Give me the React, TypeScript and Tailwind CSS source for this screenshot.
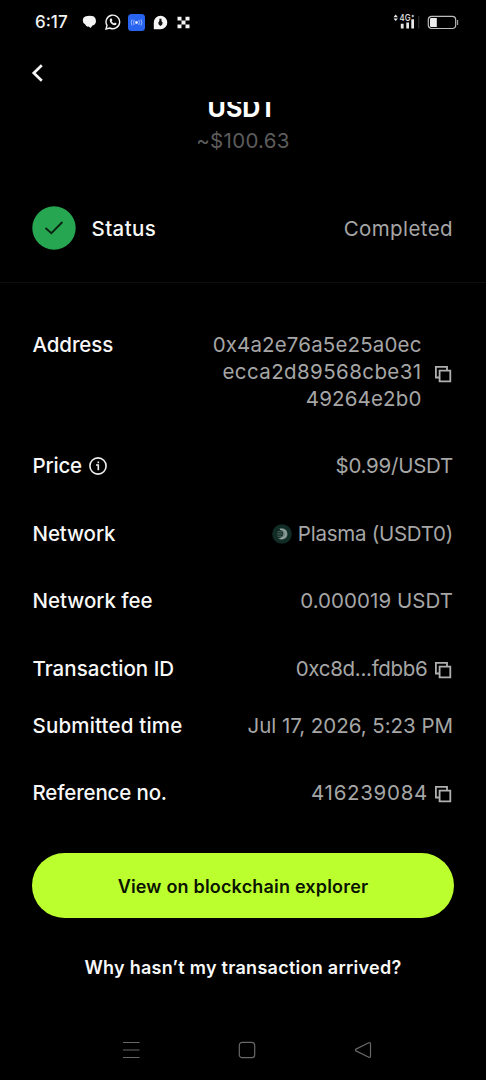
import type { ReactNode } from "react";

function CopyIcon({ className = "" }: { className?: string }) {
  return (
    <svg className={`size-[18px] shrink-0 ${className}`} viewBox="0 0 18 18" fill="none" stroke="#b0b0b0" strokeWidth="1.8">
      <path d="M5 12.5H1.9V1.9H13V5" />
      <path d="M5.6 5.6H16.3V16.3H5.6Z" />
    </svg>
  );
}

function PlasmaIcon() {
  return (
    <svg className="size-5 shrink-0" viewBox="0 0 20 20" fill="none">
      <circle cx="10" cy="10" r="9.8" fill="#112b25" />
      <path d="M7 4.8Q13 3 15.2 8Q16.5 13.5 11.5 15.3Q8.5 16 6 14.6Q11.5 13 11.2 9.5Q11 6.5 7 4.8Z" fill="#71857f" />
      <path d="M8 5.4Q14.2 5.6 14 10Q13.6 13.8 8.5 14.6" stroke="#98a8a2" strokeWidth="1.1" />
      <path d="M5.5 7.8H10M5 10H10.5M5.5 12.2H9.5" stroke="#4f665e" strokeWidth="1" />
    </svg>
  );
}

function StatusBar() {
  return (
    <div className="flex h-11 shrink-0 items-center pl-[35px] pr-[27px]">
      <span className="w-[47px] text-[17px] font-medium leading-none text-[#f2f2f2]">6:17</span>
      <svg className="h-4 w-[15px]" viewBox="0 0 15 16" fill="#f4f4f4">
        <path d="M3.8 2.2Q7.5 1.4 11.5 2.2Q14 3.6 14 7Q13.8 10.6 10.5 11.6L8.5 14L6.8 12.6Q4 13.2 3.3 10.6Q.8 9.5 .8 6.5Q.8 3.2 3.8 2.2Z" />
      </svg>
      <svg className="ml-[8px] size-4" viewBox="0 0 16 16" fill="none" stroke="#f2f2f2">
        <path d="M1 15L2 11.4A6.8 6.8 0 1 1 4.8 14Z" strokeWidth="1.4" />
        <path d="M5.5 4.5L6.7 4.4L7.4 6.2L6.6 7.2Q7.4 8.8 9 9.5L9.9 8.6L11.6 9.5Q11.5 11.2 9.8 11.3Q5.2 10.4 4.7 6.2Q4.7 5 5.5 4.5Z" fill="#f2f2f2" stroke="none" />
      </svg>
      <svg className="ml-[7px] size-[17px]" viewBox="0 0 17 17" fill="none">
        <rect width="17" height="17" rx="3.5" fill="#2864f0" />
        <circle cx="8.5" cy="8.5" r="1.3" fill="#fff" />
        <path d="M6.2 6Q5 8.5 6.2 11M10.8 6Q12 8.5 10.8 11M4 5.5Q2.4 8.5 4 11.5M13 5.5Q14.6 8.5 13 11.5" stroke="#9db8ff" strokeWidth="1" />
      </svg>
      <svg className="ml-2 size-[15px]" viewBox="0 0 15 15">
        <path d="M7.5 .7A6.8 6.8 0 0 1 7.5 14.3H.8V7.5A6.8 6.8 0 0 1 7.5 .7Z" fill="#f6f6f6" />
        <path d="M6.4 3.8H8.5V6L9.7 7.8Q9.6 10 7.5 11Q5.4 10 5.2 7.8L6.4 6Z" fill="#111" />
      </svg>
      <svg className="ml-[9px] size-[13px]" viewBox="0 0 13 13" fill="#f4f4f4">
        <path d="M.5 .8H4.5V4.6H.5ZM8.5 .8H12.5V4.6H8.5ZM4.5 4.6H8.5V8.4H4.5ZM.5 8.4H4.5V12.2H.5ZM8.5 8.4H12.5V12.2H8.5Z" />
      </svg>
      <svg className="ml-auto h-[18px] w-[28px]" viewBox="0 0 28 18" fill="#e8e8e8">
        <path d="M.5 4.2L2.7 1.6L4.9 4.2ZM.5 5.4L2.7 8L4.9 5.4Z" />
        <text x="6.5" y="8" fontFamily="Inter, sans-serif" fontSize="9" fontWeight="500" textLength="11" lengthAdjust="spacingAndGlyphs">4G</text>
        <path d="M18.6 2.6H21V3.4H18.6ZM19.4 1.8H20.2V4.2H19.4Z" />
        <path d="M7.8 10.8H10.6V15.5H7.8ZM13.3 9.6H16V15.5H13.3ZM18.3 6.2H21V15.5H18.3Z" />
        <path d="M25 3H26.3V15.5H25Z" fill="#252525" />
      </svg>
      <svg className="ml-[6px] h-[15px] w-[32px]" viewBox="0 0 32 15" fill="none">
        <rect x="1.3" y="1.3" width="27.4" height="12.2" rx="3.5" stroke="#bdbdbd" strokeWidth="1.2" />
        <path d="M4.3 3H9.8V11.9H4.3Q3 11.9 3 10.7V4.2Q3 3 4.3 3Z" fill="#ededed" />
        <path d="M30.6 5V10" stroke="#999" strokeWidth="1.2" />
      </svg>
    </div>
  );
}

function Row({ label, tracking, height, icon, children }: { label: string; tracking: string; height: string; icon?: ReactNode; children: ReactNode }) {
  return (
    <div className={`flex items-center justify-between ${height}`}>
      <div className="flex items-center gap-[7px]">
        <span className={`font-medium text-[#f8f8f8] ${tracking}`}>{label}</span>
        {icon}
      </div>
      <div className="flex items-center text-[#a6a6a6]">{children}</div>
    </div>
  );
}

export default function App() {
  return (
    <div className="flex h-[1080px] w-[486px] flex-col overflow-hidden whitespace-nowrap bg-black font-['Inter',sans-serif] text-[20.5px] leading-[27px] text-white">
      <StatusBar />
      <header className="flex h-[58px] shrink-0 items-center pl-[31px]">
        <svg className="h-[18px] w-3" viewBox="0 0 12 18" fill="none" stroke="#f5f5f5" strokeWidth="2.7">
          <path d="M10.8 1.2L2.8 9L10.8 16.8" />
        </svg>
      </header>
      <main className="flex min-h-0 flex-1 flex-col overflow-hidden">
        <div className="flex h-[94px] shrink-0 flex-col items-center overflow-hidden">
          <div className="-mt-[11px] mr-[2px] text-[25px] font-bold leading-[34px] tracking-[0.1px]">USDT</div>
          <div className="mt-[2px] text-[#5c5c5c] tracking-[0.3px]">~$100.63</div>
        </div>
        <section className="flex h-[87px] shrink-0 items-start border-b border-[#0e0e0e] pl-8 pr-[33px] pt-[10px]">
          <div className="flex h-11 w-full items-center">
            <svg className="size-11" viewBox="0 0 44 44" fill="none">
              <circle cx="22" cy="22" r="21.7" fill="#27a651" />
              <path d="M13.5 22L19.4 27.2L30.4 16" stroke="#092312" strokeWidth="1.9" />
            </svg>
            <span className="ml-[15.5px] font-medium tracking-[0.4px] text-[#f8f8f8]">Status</span>
            <span className="ml-auto tracking-[0.4px] text-[#a6a6a6]">Completed</span>
          </div>
        </section>
        <section className="pl-[32.5px] pr-[33px] pt-[48px]">
          <div className="flex h-[100px] items-start justify-between">
            <span className="font-medium tracking-[-0.1px] text-[#f8f8f8]">Address</span>
            <div className="flex items-center text-[#a6a6a6]">
              <div className="flex flex-col items-end">
                <span className="tracking-[0.15px]">0x4a2e76a5e25a0ec</span>
                <span className="tracking-[0.4px]">ecca2d89568cbe31</span>
                <span className="tracking-[0.15px]">49264e2b0</span>
              </div>
              <CopyIcon className="ml-[12.5px] mr-px mt-[5px]" />
            </div>
          </div>
          <Row
            label="Price"
            tracking="tracking-[-0.2px]"
            height="h-[69px]"
            icon={
              <svg className="size-[18px]" viewBox="0 0 18 18" fill="none" stroke="#f0f0f0" strokeWidth="1.6">
                <circle cx="9" cy="9" r="8.1" />
                <path d="M7 8H9.3V13.2M9.3 4.6V6.3" />
              </svg>
            }
          >
            <span className="tracking-[-0.25px]">$0.99/USDT</span>
          </Row>
          <Row label="Network" tracking="tracking-[-0.1px]" height="h-[67px]">
            <PlasmaIcon />
            <span className="ml-[6px] tracking-[-0.25px]">Plasma (USDT0)</span>
          </Row>
          <Row label="Network fee" tracking="tracking-[-0.03px]" height="h-[67px]">
            <span className="tracking-[0.05px]">0.000019 USDT</span>
          </Row>
          <Row label="Transaction ID" tracking="tracking-[0.03px]" height="h-[69px]">
            <span className="tracking-[-0.3px]">0xc8d...fdbb6</span>
            <CopyIcon className="ml-[6.5px] mr-px mt-[3px]" />
          </Row>
          <Row label="Submitted time" tracking="tracking-[0.18px]" height="h-[44px]">
            <span className="tracking-[-0.03px]">Jul 17, 2026, 5:23 PM</span>
          </Row>
          <Row label="Reference no." tracking="tracking-[-0.16px]" height="h-[91px]">
            <span className="tracking-[0.7px]">416239084</span>
            <CopyIcon className="ml-[6px] mr-px mt-[3px]" />
          </Row>
        </section>
        <div className="flex flex-col px-8 pt-[15px] text-[18px] font-semibold">
          <button className="h-[65px] rounded-full bg-[#bcff2f] pt-px tracking-[0.19px] text-[#0a1400]">View on blockchain explorer</button>
          <button className="mt-[36px] tracking-[0.27px] text-[#f8f8f8]">Why hasn’t my transaction arrived?</button>
        </div>
      </main>
      <nav className="flex h-[60px] shrink-0 items-center justify-between pl-[122px] pr-[114px]">
        <svg className="h-[18px] w-[18px]" viewBox="0 0 18 18" stroke="#686868" strokeWidth="1.2">
          <path d="M1 1.5H17.5M1 9H17.5M1 16.5H17.5" />
        </svg>
        <svg className="size-[18px]" viewBox="0 0 18 18" fill="none" stroke="#686868" strokeWidth="1.2">
          <rect x="1.3" y="1.3" width="15.4" height="15.4" rx="3" />
        </svg>
        <svg className="size-[18px]" viewBox="0 0 18 18" fill="none" stroke="#686868" strokeWidth="1.2" strokeLinejoin="round">
          <path d="M2 8.1L14.8 1.8Q16.5 1.2 16.5 3V15Q16.5 16.8 14.8 16.2L2 9.9Q.8 9 2 8.1Z" />
        </svg>
      </nav>
    </div>
  );
}
